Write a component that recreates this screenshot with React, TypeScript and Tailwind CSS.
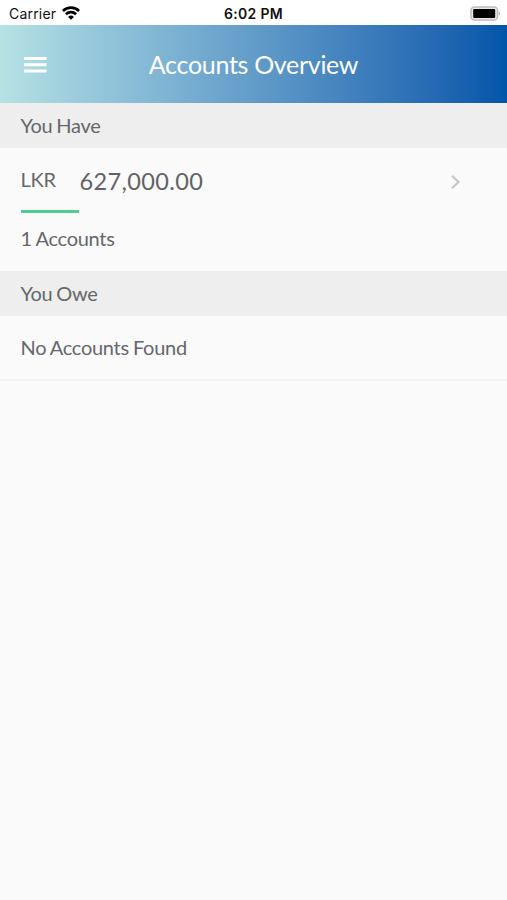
export default function App() {
  return (
    <div className="flex h-[900px] w-[507px] flex-col overflow-hidden bg-[#fafafa] font-['Lato',sans-serif] text-[20px] tracking-[-0.28px] text-[#66676a]">
      <div className="grid h-[25px] shrink-0 grid-cols-3 items-center bg-white font-['Inter',sans-serif] text-[14px] text-[#111]">
        <div className="flex items-center gap-[6px] pl-[9px] pt-[2px]">
          <span className="leading-[23px] tracking-[0.2px]">Carrier</span>
          <svg className="-mt-px" width="18" height="14" viewBox="0 0 18 14" fill="none" stroke="#000" strokeWidth="2.8">
            <path d="M.9 5a11.5 11.5 0 0 1 16.2 0M3.9 8.2a7.3 7.3 0 0 1 10.2 0" />
            <path d="M6.1 10.9a4.2 4.2 0 0 1 5.8 0L9 13.8z" fill="#000" stroke="none" />
          </svg>
        </div>
        <div className="pt-[2px] text-center font-semibold leading-[23px] tracking-[0.3px]">6:02 PM</div>
        <div className="flex justify-end pr-[6px] pt-px">
          <svg width="31" height="15" viewBox="0 0 31 15">
            <rect x="1" y="1" width="26.5" height="13" rx="3.5" fill="#e8e8e8" stroke="#bdbdbd" strokeWidth="1.5" />
            <rect x="3.2" y="3" width="22" height="9" rx="1" />
            <path d="M28.7 5.2q2.6 2.3 0 4.6z" fill="#b3b3b3" />
          </svg>
        </div>
      </div>
      <header className="grid h-[78px] shrink-0 grid-cols-[70px_1fr_70px] items-center bg-linear-to-r from-[#b6e2e4] to-[#0055a9] text-white">
        <svg className="ml-[24px] mt-px" width="23" height="16" viewBox="0 0 23 16" fill="currentColor">
          <path d="M0 0h22.5v3H0zM0 6.3h22.5v3H0zM0 12.5h22.5v3H0z" />
        </svg>
        <h1 className="text-center text-[25px] leading-[30px] tracking-[-0.3px]">Accounts Overview</h1>
      </header>
      <h2 className="h-[45px] shrink-0 bg-[#eee] pl-[20.5px] leading-[45px] [word-spacing:-1px]">You Have</h2>
      <section className="flex h-[123px] shrink-0 flex-col pl-[20.5px]">
        <div className="flex h-[62px] items-center pr-[46px]">
          <span className="w-[59px]">LKR</span>
          <span className="flex-1 pt-[6px] text-[23.5px] tracking-[0.38px] text-[#616269]">627,000.00</span>
          <svg className="mt-[6px]" width="10" height="14" viewBox="0 0 10 14" fill="none" stroke="#c7c7c9" strokeWidth="2.2">
            <path d="M1 .8l6.5 6.2L1 13.2" />
          </svg>
        </div>
        <div className="h-[3px] w-[58.5px] bg-[#4fcd91]" />
        <p className="pt-[11px] leading-[29px] [word-spacing:-0.5px]">1 Accounts</p>
      </section>
      <h2 className="h-[45px] shrink-0 bg-[#eee] pl-[20.5px] leading-[45px] [word-spacing:-1px]">You Owe</h2>
      <p className="h-[65px] shrink-0 border-b-2 border-[#f4f4f4] pl-[20.5px] leading-[63px] [word-spacing:-0.7px]">No Accounts Found</p>
    </div>
  );
}
